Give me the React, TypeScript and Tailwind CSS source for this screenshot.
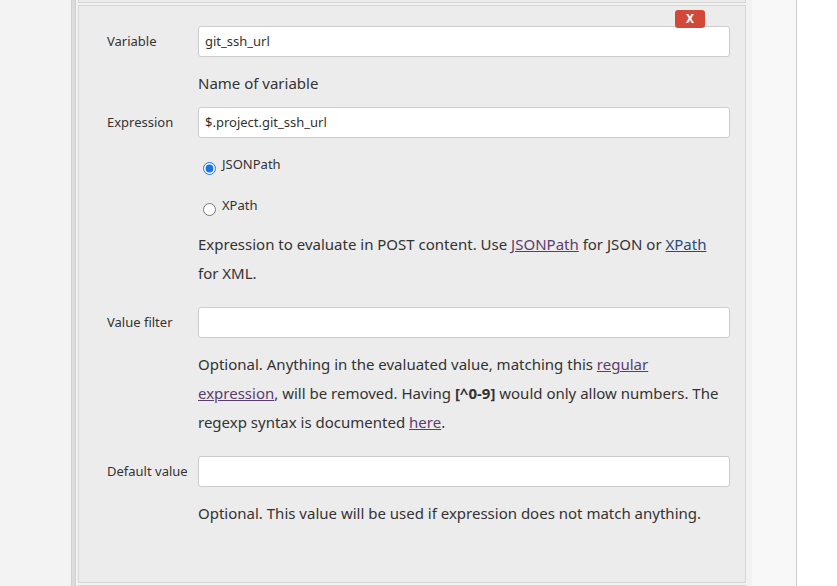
import React from "react";

const font = { fontFamily: '"Noto Sans", "Open Sans", sans-serif' };

function Row({ label, value }: { label: string; value?: string }) {
  return (
    <div className="flex items-center h-[31px]">
      <div className="w-[91px] shrink-0 text-[13px] text-[#333]">{label}</div>
      <div className="w-[532px] h-[31px] bg-white border border-[#cccccc] rounded-[3px] flex items-center px-[6px] text-[13px] text-[#333]">
        {value}
      </div>
    </div>
  );
}

function Help({ children, className = "" }: { children: React.ReactNode; className?: string }) {
  return (
    <div className={"ml-[91px] w-[532px] text-[15px] leading-[29px] text-[#333] " + className}>{children}</div>
  );
}

export default function App() {
  return (
    <div className="w-[837px] h-[586px] overflow-hidden flex bg-white" style={font}>
      <div className="w-[71px] shrink-0 bg-[#f3f3f3]" />
      <div className="w-[5px] shrink-0 bg-[#dcdcdc] border-x border-[#d0d0d0]" />
      <div className="w-[676px] shrink-0 bg-[#f2f2f2] flex flex-col pl-[2px] pr-[6px] overflow-hidden">
        <div className="h-[3px] shrink-0 border-x border-b border-[#d6d6d6] bg-[#ececec]" />
        <div className="mt-[2px] h-[578px] shrink-0 border border-[#d6d6d6] bg-[#ececec] relative pl-[28px]">
          <div className="absolute left-[596px] top-[4px] w-[30px] h-[18px] bg-[#d24939] rounded-[3px] text-white text-[12px] font-bold flex items-center justify-center leading-none">
            X
          </div>
          <div className="mt-[20px]">
            <Row label="Variable" value="git_ssh_url" />
          </div>
          <Help className="mt-[12px]">Name of variable</Help>
          <div className="mt-[9px]">
            <Row label="Expression" value="$.project.git_ssh_url" />
          </div>
          <div className="ml-[91px] mt-[16px] h-[24px] flex items-center text-[13px] text-[#333]">
            <input type="radio" checked readOnly className="w-[13px] h-[13px] ml-[5px] mr-[6px] mt-[4px] accent-[#1a73e8]" />
            <span className="-mt-[2px]">JSONPath</span>
          </div>
          <div className="ml-[91px] mt-[17px] h-[24px] flex items-center text-[13px] text-[#333]">
            <input type="radio" checked={false} readOnly className="w-[13px] h-[13px] ml-[5px] mr-[6px] mt-[4px]" />
            <span className="-mt-[2px]">XPath</span>
          </div>
          <Help className="mt-[11px]">
            Expression to evaluate in POST content. Use{" "}
            <span className="underline text-[#5a3d6e]">JSONPath</span> for JSON or{" "}
            <span className="underline text-[#2a4a7a]">XPath</span> for XML.
          </Help>
          <div className="mt-[19px]">
            <Row label="Value filter" />
          </div>
          <Help className="mt-[12px]">
            Optional. Anything in the evaluated value, matching this{" "}
            <span className="underline text-[#5a3d6e]">regular expression</span>, will be removed. Having{" "}
            <b className="font-bold">[^0-9]</b> would only allow numbers. The regexp syntax is documented{" "}
            <span className="underline text-[#5a3d6e]">here</span>.
          </Help>
          <div className="mt-[19px]">
            <Row label="Default value" />
          </div>
          <Help className="mt-[12px]">
            Optional. This value will be used if expression does not match anything.
          </Help>
        </div>
        <div className="mt-[2px] h-[10px] shrink-0 border border-[#d6d6d6] bg-[#ececec]" />
      </div>
      <div className="w-[45px] shrink-0 bg-[#f8f8f8] border-r border-[#cccccc]" />
      <div className="flex-1 bg-white" />
    </div>
  );
}
